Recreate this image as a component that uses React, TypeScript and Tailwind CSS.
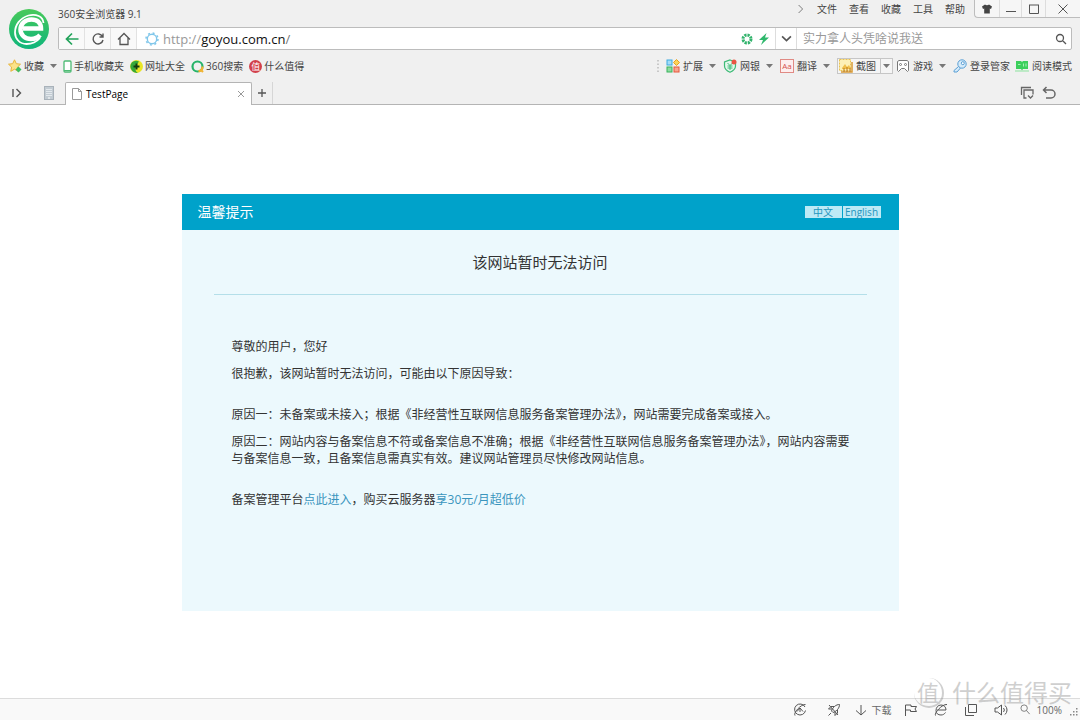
import type { ReactNode } from 'react'

const menus = ['文件', '查看', '收藏', '工具', '帮助']

function Caret() {
  return (
    <svg viewBox="0 0 7 4" className="w-[7px] h-1 shrink-0">
      <path d="M0 0h7L3.500 4z" fill="#777" />
    </svg>
  )
}

function Logo() {
  return (
    <svg viewBox="0 0 40 40" className="size-10">
      <defs>
        <linearGradient id="logo" x1="0" y1="0" x2="0" y2="1">
          <stop offset="0" stopColor="#48c95a" />
          <stop offset="1" stopColor="#0fb57c" />
        </linearGradient>
      </defs>
      <circle cx="20" cy="20" r="20" fill="url(#logo)" />
      <path
        d="M14 19.500H32C32 13.500 28 10.500 22.500 10.500 16 10.500 11.500 15 11.500 20.500s4.500 9.500 10.500 9.500c4 0 7-1.500 9-4"
        fill="none"
        stroke="#fff"
        strokeWidth="4.500"
      />
      <path
        d="M34.500 14C34 7.500 27 4.500 19.500 6.500 11 9 6 16 6 23.500c0 6 4.500 11.500 11.500 11.500 5 0 10-2 13.500-6"
        fill="none"
        stroke="#fff"
        strokeWidth="1.800"
      />
    </svg>
  )
}

function Line({ d, box = 14, width = 1, color = '#555', size = 'size-[14px]' }: {
  d: string
  box?: number
  width?: number
  color?: string
  size?: string
}) {
  return (
    <svg viewBox={`0 0 ${box} ${box}`} className={`${size} shrink-0`} fill="none" stroke={color} strokeWidth={width}>
      <path d={d} />
    </svg>
  )
}

function StarIcon() {
  return (
    <svg viewBox="0 0 14 14" className="size-[14px]">
      <path d="M6.500.8l1.800 3.900 4.200.5-3.100 2.900.8 4.200-3.700-2.100-3.700 2.100.8-4.200L.5 5.200l4.200-.5z" fill="#fbe38a" stroke="#e8b53a" />
      <path d="M10.500 7.500l3 3-3 3-3-3z" fill="#3fbf63" />
    </svg>
  )
}

function PhoneIcon() {
  return (
    <svg viewBox="0 0 9 13" className="w-[9px] h-[13px]">
      <rect x="1" y="1" width="7" height="11" rx="1" fill="#fff" stroke="#4dbb74" strokeWidth="1.300" />
      <path d="M1 10.500h7" stroke="#4dbb74" />
    </svg>
  )
}

function SiteIcon() {
  return (
    <svg viewBox="0 0 13 13" className="size-[13px]">
      <circle cx="6.500" cy="6.500" r="6.500" fill="#e9e526" />
      <path d="M2 2.200A6.500 6.500 0 0 0 8 12.800C4 11 5 7 9 1.500A6.500 6.500 0 0 0 2 2.200z" fill="#35a83a" />
      <path d="M6.500 3.500v6M3.500 6.500h6" stroke="#123c10" strokeWidth="2" />
    </svg>
  )
}

function RingIcon() {
  return (
    <svg viewBox="0 0 13 13" className="size-[13px]" fill="none" strokeWidth="2.200">
      <circle cx="6.500" cy="6.500" r="5" stroke="#27b36a" />
      <path d="M11.500 6.500a5 5 0 0 1-4 4.900" stroke="#f2b331" />
      <path d="M10 10l2 2" stroke="#f2b331" />
    </svg>
  )
}

function ZhiIcon() {
  return (
    <span className="flex size-[13px] items-center justify-center rounded-full bg-[#d2404a] text-[9px] leading-none text-white">
      值
    </span>
  )
}

function ExtIcon() {
  return (
    <svg viewBox="0 0 14 14" className="size-[14px]">
      <rect x="1" y="1" width="5" height="5" fill="#a5dcf8" stroke="#3daae0" />
      <path d="M10.500.5l3 3-3 3-3-3z" fill="#fbd35a" stroke="#e8a21d" />
      <rect x="1" y="8" width="5" height="5" fill="#8edba0" stroke="#39b35c" />
      <rect x="8" y="8" width="5" height="5" fill="#f7a590" stroke="#e5593d" />
    </svg>
  )
}

function ShieldIcon() {
  return (
    <svg viewBox="0 0 14 14" className="size-[14px]" fill="none">
      <path d="M7 1l5.500 2v4c0 3-2.500 5-5.500 6.300C4 12 1.500 10 1.500 7V3z" fill="#e3f7ec" stroke="#3dba76" strokeWidth="1.200" />
      <path d="M4.500 4L7 6.500 9.500 4M7 6.500V11M4.500 7h5M4.500 9h5" stroke="#3dba76" />
      <circle cx="11" cy="3" r="2.500" fill="#ea5442" />
    </svg>
  )
}

function TranslateIcon() {
  return (
    <span className="flex size-[14px] items-center justify-center border border-[#e08a84] bg-[#fdeeee] text-[8px] leading-none text-[#d5524c]">
      Aa
    </span>
  )
}

function CutIcon() {
  return (
    <svg viewBox="0 0 14 14" className="size-[14px]">
      <rect x="0.500" y="0.500" width="11" height="11" fill="#fdf0b8" stroke="#e9c250" strokeDasharray="2 1" />
      <path d="M3 9l3-4 2 3 2-2 2 4H3z" fill="#f0bf4c" />
      <path d="M13 3v10H2" fill="none" stroke="#d99a33" strokeWidth="1.500" />
      <path d="M5 13V9m3 4V8m3 5V9" stroke="#b9781e" />
    </svg>
  )
}

function GameIcon() {
  return (
    <svg viewBox="0 0 14 14" className="size-[14px]" fill="none" stroke="#777">
      <path d="M3 1.500h8l1.500 1v9l-1 1-3-3h-3l-3 3-1-1v-9z" fill="#fff" />
      <circle cx="4.500" cy="5.500" r="1" />
      <circle cx="9.500" cy="5.500" r="1" />
    </svg>
  )
}

function KeyIcon() {
  return (
    <svg viewBox="0 0 14 14" className="size-[14px]" fill="none" stroke="#5a9fd4">
      <path d="M5.500 7.500l-4.500 4v1.500h3l3.500-4" fill="#d6ebfa" />
      <circle cx="9" cy="5" r="4.200" fill="#d6ebfa" />
      <circle cx="9.800" cy="4.200" r="1.500" fill="#fff" />
    </svg>
  )
}

function ReadIcon() {
  return (
    <svg viewBox="0 0 14 14" className="size-[14px]">
      <path d="M1 2h5l1 1 1-1h5v8H8l-1 1.500L6 10H1z" fill="#3ccf5c" />
      <path d="M3 5.500h2.500M8.500 4.500v3M11 4.500v3" stroke="#a6f0b4" />
      <path d="M0 12h14" stroke="#8be39d" />
    </svg>
  )
}

function Bookmark({ icon, label }: { icon: ReactNode; label: string }) {
  return (
    <a href="#" className="flex items-center gap-0.5">
      {icon}
      {label}
    </a>
  )
}

function Tool({ icon, label, caret = false }: { icon: ReactNode; label: string; caret?: boolean }) {
  return (
    <button type="button" className="flex items-center gap-[3px]">
      {icon}
      {label}
      {caret && (
        <span className="pl-[3px] pr-0.5">
          <Caret />
        </span>
      )}
    </button>
  )
}

function TitleBar() {
  return (
    <div className="flex h-[27px] items-start">
      <h1 className="self-center text-[#444]">360安全浏览器 9.1</h1>
      <nav className="ml-auto flex h-[18px] items-center gap-3 pr-[9px]">
        <button type="button" aria-label="展开">
          <Line d="M2 0l5 5-5 5" box={10} width={1.200} color="#777" size="size-2" />
        </button>
        {menus.map((menu) => (
          <button key={menu} type="button">{menu}</button>
        ))}
      </nav>
      <div className="flex h-[18px] rounded-bl border-b border-l border-[#bdbdbd] bg-[#f6f6f6]">
        <button type="button" aria-label="皮肤" className="flex w-[25px] items-center justify-center border-r border-[#ddd]">
          <svg viewBox="0 0 10 10" className="size-[10px]">
            <path d="M3 .5c.8 1 3.200 1 4 0L10 2.500 9 5 7.800 4.500v5H2.200v-5L1 5 0 2.500z" fill="#444" />
          </svg>
        </button>
        <button type="button" aria-label="最小化" className="flex w-[22px] items-center justify-center border-r border-[#ddd]">
          <Line d="M1 8.500h10" box={12} size="size-3" />
        </button>
        <button type="button" aria-label="最大化" className="flex w-6 items-center justify-center border-r border-[#ddd]">
          <Line d="M1.500 2v8.500h9V2M1 2h10" box={12} size="size-3" />
        </button>
        <button type="button" aria-label="关闭" className="flex w-[34px] items-center justify-center">
          <Line d="M1.500 1.500l9 9M10.500 1.500l-9 9" box={12} size="size-3" />
        </button>
      </div>
    </div>
  )
}

function AddressBar() {
  return (
    <form className="mr-2 flex h-[23px] items-stretch rounded-xs border border-[#bcbcbc] bg-white">
      <button type="button" aria-label="后退" className="flex w-[26px] items-center justify-center border-r border-[#e2e2e2] bg-[#f9f9f9]">
        <Line d="M13.500 7H1.500M7 1.500L1.500 7 7 12.500" width={1.700} color="#22a35a" />
      </button>
      <button type="button" aria-label="刷新" className="flex w-[26px] items-center justify-center border-r border-[#e2e2e2] bg-[#f9f9f9]">
        <Line d="M11.500 4.500A5 5 0 1 0 12 8M12 1.500V5H8.500" width={1.400} />
      </button>
      <button type="button" aria-label="主页" className="flex w-[26px] items-center justify-center border-r border-[#e2e2e2] bg-[#f9f9f9]">
        <Line d="M1 7.500l6-6 6 6M3 6v6.500h8V6" width={1.300} />
      </button>
      <div className="flex flex-1 items-center pl-2 text-[13px]">
        <svg viewBox="0 0 14 14" className="mr-1 size-[14px]" fill="none" stroke="#7fc6ea">
          <circle cx="7" cy="7" r="4.700" strokeWidth="1.400" />
          <circle cx="7" cy="7" r="6" strokeWidth="1.500" strokeDasharray="2 2.700" />
        </svg>
        <label htmlFor="url" className="text-[#999]">http://</label>
        <input id="url" type="text" defaultValue="goyou.com.cn" className="field-sizing-content text-[#111] outline-none" />
        <span className="text-[#777]">/</span>
      </div>
      <div className="flex items-center gap-[6px] pr-[6px]">
        <svg viewBox="0 0 12 12" className="size-3" fill="none" stroke="#32b36c">
          <circle cx="6" cy="6" r="4" strokeWidth="3" strokeDasharray="2.200 .94" />
        </svg>
        <svg viewBox="0 0 10 12" className="w-[10px] h-3">
          <path d="M7.500 0L0 7h4L2 12l8-7.500H6z" fill="#2fb86c" />
        </svg>
      </div>
      <button type="button" aria-label="历史" className="flex w-[22px] items-center justify-center border-x border-[#ddd]">
        <Line d="M1 3l4 4 4-4" box={10} width={1.500} size="size-[11px]" />
      </button>
      <div className="flex w-[274px] items-center pr-1 pl-[6px]">
        <input
          type="search"
          aria-label="搜索"
          placeholder="实力拿人头凭啥说我送"
          className="min-w-0 flex-1 text-xs outline-none placeholder:text-[#999]"
        />
        <button type="submit" aria-label="搜索">
          <Line d="M8.500 5a3.500 3.500 0 1 1-7 0 3.500 3.500 0 0 1 7 0zM7.500 7.500L11 11" box={12} width={1.300} size="size-3" />
        </button>
      </div>
    </form>
  )
}

function BookmarkBar() {
  return (
    <div className="flex h-8 items-center pr-2 pl-2 text-[#444]">
      <div className="flex items-center gap-[6px]">
        <Bookmark icon={<StarIcon />} label="收藏" />
        <Caret />
        <Bookmark icon={<PhoneIcon />} label="手机收藏夹" />
        <Bookmark icon={<SiteIcon />} label="网址大全" />
        <Bookmark icon={<RingIcon />} label="360搜索" />
        <Bookmark icon={<ZhiIcon />} label="什么值得" />
      </div>
      <div className="ml-auto flex items-center gap-[5px]">
        <svg viewBox="0 0 2 12" className="mr-0.5 w-0.5 h-3">
          <path d="M1 0v12" stroke="#bbb" strokeWidth="1.500" strokeDasharray="1.500 2" />
        </svg>
        <Tool icon={<ExtIcon />} label="扩展" caret />
        <Tool icon={<ShieldIcon />} label="网银" caret />
        <Tool icon={<TranslateIcon />} label="翻译" caret />
        <div className="-mr-0.5 flex h-4 items-stretch border border-[#c6c6c6] bg-[#f5f5f5]">
          <button type="button" className="flex items-center gap-[3px] pr-1 pl-px">
            <CutIcon />
            截图
          </button>
          <button type="button" aria-label="截图选项" className="flex items-center border-l border-[#c6c6c6] px-0.5">
            <Caret />
          </button>
        </div>
        <Tool icon={<GameIcon />} label="游戏" caret />
        <Tool icon={<KeyIcon />} label="登录管家" />
        <Tool icon={<ReadIcon />} label="阅读模式" />
      </div>
    </div>
  )
}

function TabBar() {
  return (
    <div className="flex h-[23px] items-end border-b border-[#b4b4b4]">
      <div className="flex h-full w-[65px] items-center gap-5 pl-[10px]">
        <button type="button" aria-label="侧边栏">
          <Line d="M3 3v8M6.500 3l4 4-4 4" width={1.400} />
        </button>
        <button type="button" aria-label="手机">
          <svg viewBox="0 0 10 14" className="w-[10px] h-[14px]" fill="none" stroke="#a9b2ba">
            <rect x="0.500" y="0.500" width="9" height="13" fill="#c3ccd3" />
            <path d="M2 3.500h6M2 5.500h6M2 7.500h6M2 9.500h6" stroke="#e4e9ed" />
            <path d="M4 12h2" stroke="#fff" />
          </svg>
        </button>
      </div>
      <div className="-mb-px flex h-[23px] w-[187px] items-center rounded-t-xs border border-b-0 border-[#b4b4b4] bg-white px-[6px] text-black">
        <svg viewBox="0 0 10 12" className="mr-1 w-[10px] h-3" fill="#fff" stroke="#999">
          <path d="M.5.5h6l3 3v8h-9zM6.500.5v3h3" />
        </svg>
        TestPage
        <button type="button" aria-label="关闭标签页" className="ml-auto">
          <Line d="M1 1l6 6M7 1L1 7" box={8} color="#999" size="size-2" />
        </button>
      </div>
      <button type="button" aria-label="新标签页" className="flex h-full w-[21px] items-center justify-center border-r border-[#d6d6d6]">
        <Line d="M5 1v8M1 5h8" box={10} width={1.300} size="size-[10px]" />
      </button>
      <div className="ml-auto flex h-full items-center gap-2 pr-6">
        <button type="button" aria-label="标签列表">
          <Line d="M1.500 9V1.500H11M6.500 12H4V4h9v4.500M8 9.500l2.500 2.500L13 9.500" width={1.300} color="#666" />
        </button>
        <button type="button" aria-label="恢复标签页">
          <Line d="M4.500 1L1.500 4l3 3M1.500 4H9a4 4 0 0 1 0 8H4" width={1.500} color="#666" />
        </button>
      </div>
    </div>
  )
}

function Notice() {
  return (
    <section className="mx-auto flex min-h-[417px] max-w-[717px] flex-col bg-[#ecf9fd] text-xs leading-[17px] text-[#333]">
      <header className="flex h-9 items-center justify-between bg-[#00a2ca] pr-[18px] pl-4">
        <h2 className="text-sm text-white">温馨提示</h2>
        <div className="flex gap-px text-[10px] leading-3 text-[#2495bd]">
          <button type="button" className="w-[37px] bg-[#bdeaf6]">中文</button>
          <button type="button" className="w-[38px] bg-[#bdeaf6]">English</button>
        </div>
      </header>
      <h3 className="mx-8 h-[65px] border-b border-[#b4dfe9] text-center text-[15px] leading-[64px]">
        该网站暂时无法访问
      </h3>
      <div className="flex flex-col gap-6 pt-[43px] pr-10 pl-[50px]">
        <div className="space-y-[10px]">
          <p>尊敬的用户，您好</p>
          <p>很抱歉，该网站暂时无法访问，可能由以下原因导致：</p>
        </div>
        <div className="space-y-[10px]">
          <p>原因一：未备案或未接入；根据《非经营性互联网信息服务备案管理办法》，网站需要完成备案或接入。</p>
          <p>
            原因二：网站内容与备案信息不符或备案信息不准确；根据《非经营性互联网信息服务备案管理办法》，网站内容需要与备案信息一致，且备案信息需真实有效。建议网站管理员尽快修改网站信息。
          </p>
        </div>
        <p>
          备案管理平台<a href="#" className="text-[#3a95bd]">点此进入</a>，购买云服务器
          <a href="#" className="text-[#3a95bd]">享30元/月超低价</a>
        </p>
      </div>
    </section>
  )
}

function StatusBar() {
  return (
    <footer className="relative flex h-[22px] items-center justify-end border-t border-[#dcdcdc] bg-[#f9f9f9] pr-0.5 text-[#666]">
      <div className="flex items-center gap-5">
        <button type="button" aria-label="加速">
          <Line d="M12 4a5.500 5.500 0 1 0 .5 3.500M2 12.500C0 10 8 1 12.500 1.500M4 8.500L7 5l3 3.500M7 5v4" />
        </button>
        <button type="button" aria-label="火箭">
          <Line d="M12.500 1.500C9 1.500 6 4 4.500 8L6 9.500c4-1.500 6.500-4.500 6.500-8zM5 6H1.500L4 3.500h3M8 9v3.500l2.500-2.500V7M4 10l-2.500 2.500M2 2l9 10" />
        </button>
      </div>
      <button type="button" className="ml-[14px] flex items-center gap-[5px]">
        <Line d="M6 1v10M1 6.500L6 11l5-4.500" box={12} size="size-3" />
        下载
      </button>
      <div className="ml-3 flex items-center gap-4">
        <button type="button" aria-label="举报">
          <Line d="M1.500 13V2H7v1.500h5.500L11 6l1.500 2.500H6.500V7h-5" />
        </button>
        <button type="button" aria-label="内核">
          <Line d="M3.500 7H12c0-3-2-5-5-5S2 4.500 2 7.500 4 12 7 12c2 0 3.500-1 4.500-2.500M1.500 12.500C0 10 8 1 13 1.500" />
        </button>
        <button type="button" aria-label="窗口">
          <Line d="M4.500 1.500h8v8h-8zM1.500 4v8.500H10" />
        </button>
        <button type="button" aria-label="声音">
          <Line d="M1 5h2.500L7.500 2v10L3.500 9H1zM9.500 5a3 3 0 0 1 0 4M11 2.500a6 6 0 0 1 0 9" />
        </button>
      </div>
      <button type="button" className="ml-3 mr-2 flex items-center gap-[6px] leading-3">
        <Line d="M8 4.500a3.500 3.500 0 1 1-7 0 3.500 3.500 0 0 1 7 0zM7 7l3.500 4" box={12} color="#777" size="size-[11px]" />
        100%
      </button>
      <svg viewBox="0 0 8 8" className="size-2 self-end mb-1" fill="#888">
        <path d="M6 0h1.500v1.500H6zM3 3h1.500v1.500H3zM6 3h1.500v1.500H6zM0 6h1.500v1.500H0zM3 6h1.500v1.500H3zM6 6h1.500v1.500H6z" />
      </svg>
      <div className="pointer-events-none absolute right-2 bottom-3 flex items-center gap-2 text-2xl leading-[30px] text-[#8a8a8a] opacity-40">
        <span className="flex size-[30px] items-center justify-center rounded-full border-r-2 border-b-2 border-current text-[22px] leading-none">
          值
        </span>
        什么值得买
      </div>
    </footer>
  )
}

export default function App() {
  return (
    <div
      lang="zh-CN"
      className="flex min-h-screen flex-col bg-white font-['Open_Sans','Noto_Sans_CJK_SC',sans-serif] text-[10px] leading-4 text-[#444]"
    >
      <header className="bg-[#f0f0f0]">
        <div className="flex">
          <div className="w-[58px] shrink-0 pt-[9px] pl-[9px]">
            <Logo />
          </div>
          <div className="min-w-0 flex-1">
            <TitleBar />
            <AddressBar />
          </div>
        </div>
        <BookmarkBar />
        <TabBar />
      </header>
      <main className="flex-1 pt-[89px] pb-10">
        <Notice />
      </main>
      <StatusBar />
    </div>
  )
}
